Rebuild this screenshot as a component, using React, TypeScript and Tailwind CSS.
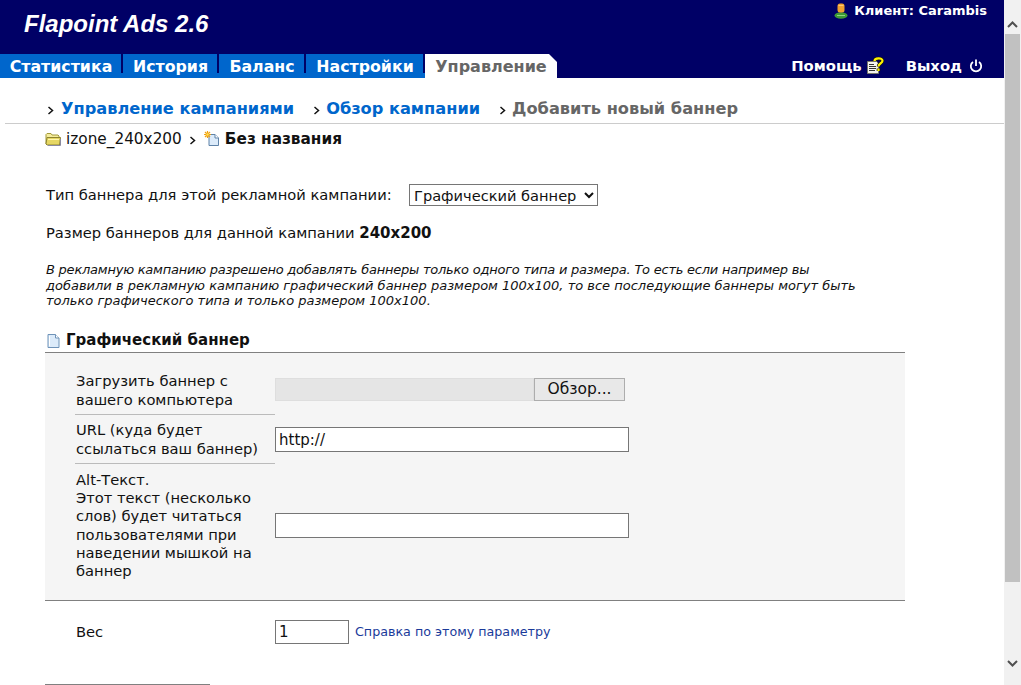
import React from 'react';

const FolderIcon = () => (
  <svg width="17" height="14" viewBox="0 0 17 14" className="shrink-0">
    <path d="M1 12V2.500L2 1.500h4l1 1.500h6l1 1v1.500" fill="#f5ec9c" stroke="#a39a3a" />
    <path d="M1 12l1-6.500h13.500l-1 7.500H2z" fill="#e6d763" stroke="#8d8430" />
    <path d="M3 7.500h11" stroke="#fff6b0" />
    <path d="M15.500 7v6.500H3" stroke="#8a8aa0" fill="none" />
  </svg>
);

const DocIcon = () => (
  <svg width="15" height="16" viewBox="0 0 15 16" className="shrink-0">
    <path d="M2 1.500h7.500l3.500 3.500v9.500H2z" fill="#dcebfa" stroke="#6f93b8" />
    <path d="M9.500 1.500v3.500H13" fill="#fff" stroke="#6f93b8" />
    <path d="M3.500 3v10" stroke="#fff" />
  </svg>
);

const NewDocIcon = () => (
  <svg width="16" height="16" viewBox="0 0 16 16" className="shrink-0">
    <path d="M5 3.500h6l3.500 3.500v7.500H5z" fill="#dcebfa" stroke="#5f83a8" />
    <path d="M11 3.500v3.500h3.500" fill="#fff" stroke="#5f83a8" />
    <path d="M3.500 0v7M0 3.500h7M1 1l5 5M6 1l-5 5" stroke="#f0a010" strokeWidth="1.200" />
    <circle cx="3.500" cy="3.500" r="1.200" fill="#ffe050" />
  </svg>
);

const UserIcon = () => (
  <svg width="14" height="16" viewBox="0 0 14 16" className="shrink-0">
    <ellipse cx="7" cy="12.500" rx="6.500" ry="3.200" fill="#3d9a35" />
    <path d="M3 12.500h8" stroke="#8fd47f" />
    <rect x="3.500" y="0.500" width="7" height="9" rx="2.500" fill="#f0a030" />
    <path d="M4.500 2.500h5" stroke="#ffc870" />
  </svg>
);

const HelpIcon = () => (
  <svg width="18" height="18" viewBox="0 0 18 18" className="shrink-0">
    <path d="M0.500 4.500h9l2 2v10h-11z" fill="#f4f4f0" stroke="#77776a" />
    <path d="M2 7.500h5M2 9.500h7M2 11.500h7M2 13.500h6" stroke="#333" />
    <path d="M7.500 4C7.500 0.800 15.500 0.200 15.500 3.800C15.500 6.500 11.500 6 11.500 9.500M11.500 11.500v2.500" fill="none" stroke="#111" strokeWidth="3.600" />
    <path d="M7.500 4C7.500 0.800 15.500 0.200 15.500 3.800C15.500 6.500 11.500 6 11.500 9.500M11.500 11.500v2.500" fill="none" stroke="#fff200" strokeWidth="2.200" />
  </svg>
);

const PowerIcon = () => (
  <svg width="14" height="14" viewBox="0 0 14 14" fill="none" stroke="#fff" strokeWidth="1.800" className="shrink-0">
    <path d="M7 0.500v6.500" />
    <path d="M4 3a5.200 5.200 0 1 0 6 0" />
  </svg>
);

const Crumb = () => (
  <svg width="7" height="9" viewBox="0 0 7 9" fill="none" stroke="#111" strokeWidth="1.500" className="mt-[3px] shrink-0">
    <path d="M1.500 1l4 3.500-4 3.500" />
  </svg>
);

const tabs = [
  { label: 'Статистика', cls: 'w-[121px]' },
  { label: 'История', cls: 'w-[94px]' },
  { label: 'Баланс', cls: 'w-[85px]' },
  { label: 'Настройки', cls: 'w-[117px]' },
];

const App = () => {
  return (
    <div className="flex h-[685px] w-[1021px] overflow-hidden bg-white font-['DejaVu_Sans',Verdana,sans-serif] text-[14.7px] text-[#111]">
      <div className="w-[1004px] shrink-0 overflow-hidden">
        <div className="h-[78px] bg-[#000066]">
          <div className="flex h-[54px] items-start justify-between">
            <div className="pl-6 pt-[9px] font-['Liberation_Sans',Arial,sans-serif] text-[24px] font-bold italic leading-[30px] text-white">
              Flapoint Ads 2.6
            </div>
            <div className="flex items-center gap-[6px] pr-[17px] pt-[3px] text-[13px] font-bold leading-[16px] text-white">
              <UserIcon />
              <span>Клиент: Carambis</span>
            </div>
          </div>
          <div className="flex h-6 items-start justify-between">
            <div className="flex h-6 items-start">
              <div className="flex h-6 items-start bg-[#0066cc]">
                {tabs.map((t) => (
                  <React.Fragment key={t.label}>
                    <div className={`${t.cls} flex h-6 items-center justify-center pl-[1px] pt-[1px] text-[15.8px] font-bold text-white`}>{t.label}</div>
                    <div className="h-[19px] w-[2px] bg-[#000066]" />
                  </React.Fragment>
                ))}
              </div>
              <div className="flex h-6 w-[132px] items-center justify-center bg-white pt-[1px] text-[16px] font-bold text-[#666] [clip-path:polygon(0_0,calc(100%-8px)_0,100%_8px,100%_100%,0_100%)]">
                Управление
              </div>
            </div>
            <div className="flex h-6 items-center text-[14.8px] font-bold text-white">
              <span>Помощь</span>
              <span className="ml-[5px]"><HelpIcon /></span>
              <span className="ml-[21px]">Выход</span>
              <span className="ml-[7px] mr-[21px]"><PowerIcon /></span>
            </div>
          </div>
        </div>

        <div className="flex h-[45px] items-center pl-[47px] pt-[17px] text-[16.2px] font-bold">
          <Crumb />
          <span className="ml-[7px] text-[#0066cc]">Управление кампаниями</span>
          <span className="ml-[19px]"><Crumb /></span>
          <span className="ml-[6px] text-[#0066cc]">Обзор кампании</span>
          <span className="ml-[19px]"><Crumb /></span>
          <span className="ml-[6px] text-[#666]">Добавить новый баннер</span>
        </div>

        <div className="ml-[5px] border-t border-[#cccccc]" />

        <div className="ml-[45px] flex h-[29px] items-center text-[15.3px] leading-4">
          <FolderIcon />
          <span className="ml-[4px]">izone_240x200</span>
          <span className="ml-[7px]"><Crumb /></span>
          <span className="ml-[8px]"><NewDocIcon /></span>
          <span className="ml-[5px] font-bold">Без названия</span>
        </div>

        <div className="ml-[46px] mt-[29px] flex h-[26px] items-center">
          <span className="w-[363px] shrink-0">Тип баннера для этой рекламной кампании:</span>
          <select className="h-[22px] w-[189px] border border-[#767676] bg-white text-[14.6px] text-[#111]">
            <option>Графический баннер</option>
          </select>
        </div>

        <div className="ml-[46px] mt-[16px] h-[18px] leading-[18px]">
          Размер баннеров для данной кампании <b className="text-[15px]">240x200</b>
        </div>

        <p className="ml-[46px] mt-[20px] h-[47px] w-[850px] whitespace-nowrap text-[13px] italic leading-[15.5px]">
          <span className="tracking-[-0.23px]">В рекламную кампанию разрешено добавлять баннеры только одного типа и размера. То есть если например вы</span><br />
          добавили в рекламную кампанию графический баннер размером 100x100, то все последующие баннеры могут быть<br />
          только графического типа и только размером 100x100.
        </p>

        <div className="ml-[46px] mt-[20px] flex h-[23px] items-center text-[15px] font-bold">
          <DocIcon />
          <span className="ml-[5px]">Графический баннер</span>
        </div>

        <div className="ml-[45px] w-[860px] border-y border-[#808080] bg-[#f5f5f5] pl-[30px]">
          <div className="flex h-[62px]">
            <div className="flex h-full w-[200px] shrink-0 items-center border-b border-[#bbbbbb] pl-[1px] pt-[14px] leading-[18.3px]">
              <span>Загрузить баннер с<br />вашего компьютера</span>
            </div>
            <div className="mt-[11px] flex h-[23px] self-center">
              <div className="w-[259px] border border-[#dedede] bg-[#e5e5e5]" />
              <div className="flex w-[91px] items-center justify-center border border-[#adadad] bg-[#e8e8e8] text-[15.5px]">Обзор...</div>
            </div>
          </div>
          <div className="flex h-[49px] items-center">
            <div className="flex h-full w-[200px] shrink-0 items-center border-b border-[#bbbbbb] pl-[1px] pt-[1px] leading-[18.3px]">
              <span>URL (куда будет<br />ссылаться ваш баннер)</span>
            </div>
            <input readOnly value="http://" className="h-[25px] w-[354px] border border-[#767676] bg-white pl-[3px] text-[15px] text-[#111]" />
          </div>
          <div className="flex h-[136px] items-center pb-[13px]">
            <div className="w-[200px] shrink-0 pl-[1px] leading-[18.3px]">
              Alt-Текст.<br />Этот текст (несколько<br />слов) будет читаться<br />пользователями при<br />наведении мышкой на<br />баннер
            </div>
            <input readOnly value="" className="h-[25px] w-[354px] border border-[#767676] bg-white" />
          </div>
        </div>

        <div className="ml-[75px] mt-[19px] flex h-[24px] items-center">
          <div className="w-[200px] shrink-0 pl-[1px]">Вес</div>
          <input readOnly value="1" className="h-[24px] w-[74px] border border-[#767676] bg-white pl-[3px] text-[15px] text-[#111]" />
          <span className="ml-[6px] text-[12.7px] text-[#1a3a9a]">Справка по этому параметру</span>
        </div>

        <div className="ml-[45px] mt-[40px] w-[165px] border-t border-[#808080]" />
      </div>

      <div className="flex h-[685px] w-[17px] shrink-0 flex-col items-center bg-[#f1f1f1]">
        <div className="flex h-[34px] items-end pb-[6px]">
          <svg width="11" height="7" viewBox="0 0 11 7" fill="none" stroke="#505050" strokeWidth="2"><path d="M1 6l4.500-4.500L10 6" /></svg>
        </div>
        <div className="h-[548px] w-[15px] bg-[#c1c1c1]" />
        <div className="flex flex-1 items-start pt-[78px]">
          <svg width="11" height="7" viewBox="0 0 11 7" fill="none" stroke="#505050" strokeWidth="2"><path d="M1 1l4.500 4.500L10 1" /></svg>
        </div>
      </div>
    </div>
  );
};

export default App;
